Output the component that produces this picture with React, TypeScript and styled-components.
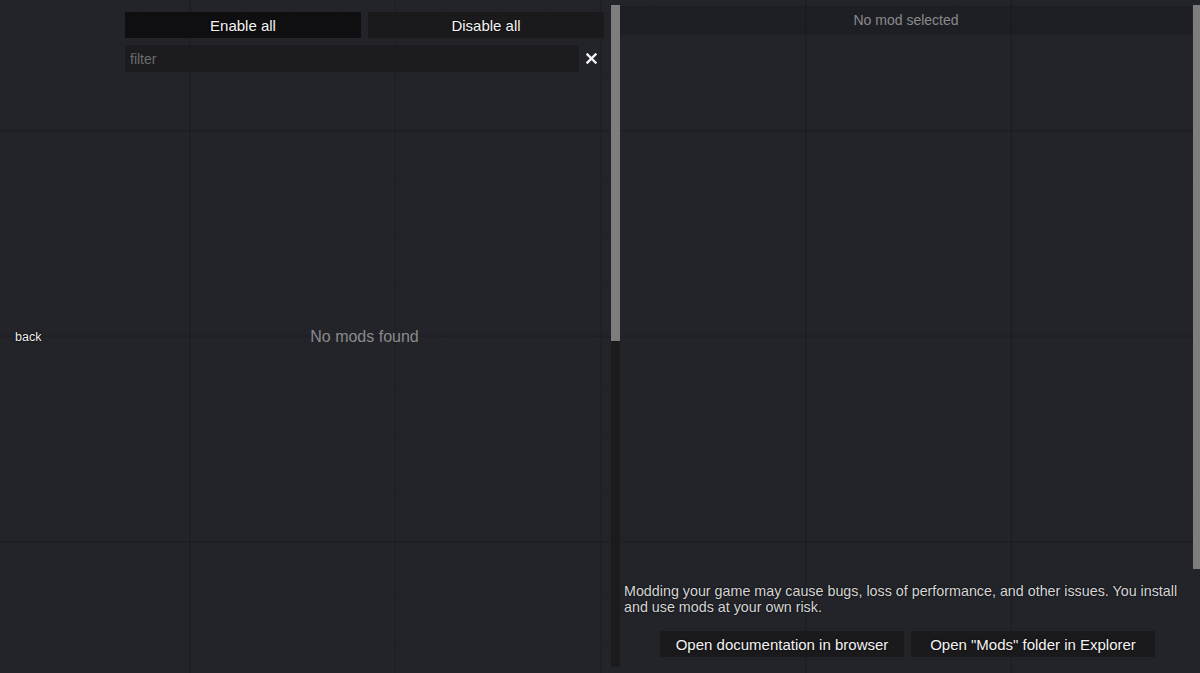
import styled, { createGlobalStyle } from 'styled-components'

const GlobalStyle = createGlobalStyle`
  html, body {
    margin: 0;
    padding: 0;
    background: #232429;
  }
  * {
    box-sizing: border-box;
  }
`

const Screen = styled.div`
  width: 1200px;
  height: 673px;
  overflow: hidden;
  display: flex;
  font-family: 'Liberation Sans', Arial, sans-serif;
  background-color: #232429;
  background-image:
    linear-gradient(90deg, rgba(0, 0, 0, 0.1) 2px, transparent 2px),
    linear-gradient(180deg, rgba(0, 0, 0, 0.1) 2px, transparent 2px),
    linear-gradient(90deg, rgba(0, 0, 0, 0.05) 1px, transparent 1px),
    linear-gradient(180deg, rgba(0, 0, 0, 0.05) 1px, transparent 1px);
  background-size: 205.4px 205.4px, 205.4px 205.4px, 51.35px 51.35px, 51.35px 51.35px;
  background-position: 189px 130px, 189px 130px, 189px 130px, 189px 130px;
`

const BackColumn = styled.div`
  width: 125px;
  flex-shrink: 0;
  display: flex;
  align-items: center;
  padding-left: 15px;
`

const BackLink = styled.span`
  font-size: 12.5px;
  color: #f2f2f2;
  text-shadow: 0 0 2px #000, 0 0 1px #000;
  cursor: pointer;
`

const ModsPanel = styled.div`
  width: 479px;
  flex-shrink: 0;
  display: grid;
  grid-template-columns: 1fr;
  grid-template-rows: 1fr;

  & > * {
    grid-area: 1 / 1;
  }
`

const ModsToolbar = styled.div`
  align-self: start;
  padding-top: 12px;
  display: flex;
  flex-direction: column;
  gap: 7px;
`

const ButtonRow = styled.div`
  display: flex;
  gap: 7px;
`

const ToggleButton = styled.button<{ $dark?: boolean }>`
  width: 236px;
  height: 26px;
  border: none;
  padding: 0;
  background: ${p => (p.$dark ? '#0f0f11' : '#1a1a1d')};
  color: #f4f4f4;
  font-family: inherit;
  font-size: 15px;
  text-shadow: 0 0 2px #000;
  cursor: pointer;
`

const FilterRow = styled.div`
  display: flex;
  height: 27px;
`

const FilterInput = styled.input`
  width: 454px;
  height: 27px;
  border: none;
  outline: none;
  padding: 0 5px;
  background: #1c1c20;
  color: #ddd;
  font-family: inherit;
  font-size: 14px;

  &::placeholder {
    color: #6b6b6e;
  }
`

const ClearButton = styled.button`
  width: 25px;
  height: 27px;
  border: none;
  padding: 0;
  background: transparent;
  display: flex;
  align-items: center;
  justify-content: center;
  cursor: pointer;
`

const EmptyMessage = styled.div`
  align-self: center;
  justify-self: center;
  font-size: 16px;
  color: #8a8a8d;
`

const ScrollTrack = styled.div<{ $width: number; $track?: boolean }>`
  width: ${p => p.$width}px;
  flex-shrink: 0;
  margin-top: 5px;
  height: 662px;
  background: ${p => (p.$track ? '#1b1b1e' : 'transparent')};
`

const ScrollThumb = styled.div`
  width: 100%;
  background: #7d7d7e;
`

const DetailsPanel = styled.div`
  width: 573px;
  flex-shrink: 0;
  display: flex;
  flex-direction: column;
  padding-top: 6px;
`

const DetailsHeader = styled.div`
  width: 572px;
  height: 29px;
  line-height: 28px;
  text-align: center;
  background: rgba(0, 0, 0, 0.12);
  color: #8a8a8d;
  font-size: 14px;
`

const DetailsFooter = styled.div`
  margin-top: auto;
  padding: 0 4px 16px;
`

const Warning = styled.p`
  margin: 0;
  width: 566px;
  font-size: 14.3px;
  line-height: 16px;
  color: #d6d6d6;
  text-shadow: 0 0 2px #000;
`

const LinkRow = styled.div`
  display: flex;
  justify-content: center;
  gap: 7px;
  margin-top: 16px;
  padding-left: 2px;
`

const LinkButton = styled.button`
  width: 244px;
  height: 26px;
  border: none;
  padding: 0;
  background: #1a1a1d;
  color: #f4f4f4;
  font-family: inherit;
  font-size: 15px;
  text-shadow: 0 0 2px #000;
  cursor: pointer;
`

function CloseIcon() {
  return (
    <svg width="11" height="11" viewBox="0 0 11 11">
      <path d="M1.5 1.5 L9.5 9.5 M9.5 1.5 L1.5 9.5" stroke="#f4f4f4" strokeWidth="2.4" strokeLinecap="square" />
    </svg>
  )
}

export default function App() {
  return (
    <>
      <GlobalStyle />
      <Screen>
        <BackColumn>
          <BackLink>back</BackLink>
        </BackColumn>

        <ModsPanel>
          <ModsToolbar>
            <ButtonRow>
              <ToggleButton $dark>Enable all</ToggleButton>
              <ToggleButton>Disable all</ToggleButton>
            </ButtonRow>
            <FilterRow>
              <FilterInput placeholder="filter" />
              <ClearButton>
                <CloseIcon />
              </ClearButton>
            </FilterRow>
          </ModsToolbar>
          <EmptyMessage>No mods found</EmptyMessage>
        </ModsPanel>

        <ScrollTrack $width={9} $track style={{ marginLeft: 7 }}>
          <ScrollThumb style={{ height: 336 }} />
        </ScrollTrack>

        <DetailsPanel>
          <DetailsHeader>No mod selected</DetailsHeader>
          <DetailsFooter>
            <Warning>
              Modding your game may cause bugs, loss of performance, and other issues. You install and use mods at your own risk.
            </Warning>
            <LinkRow>
              <LinkButton>Open documentation in browser</LinkButton>
              <LinkButton>Open "Mods" folder in Explorer</LinkButton>
            </LinkRow>
          </DetailsFooter>
        </DetailsPanel>

        <ScrollTrack $width={7}>
          <ScrollThumb style={{ height: 564 }} />
        </ScrollTrack>
      </Screen>
    </>
  )
}
